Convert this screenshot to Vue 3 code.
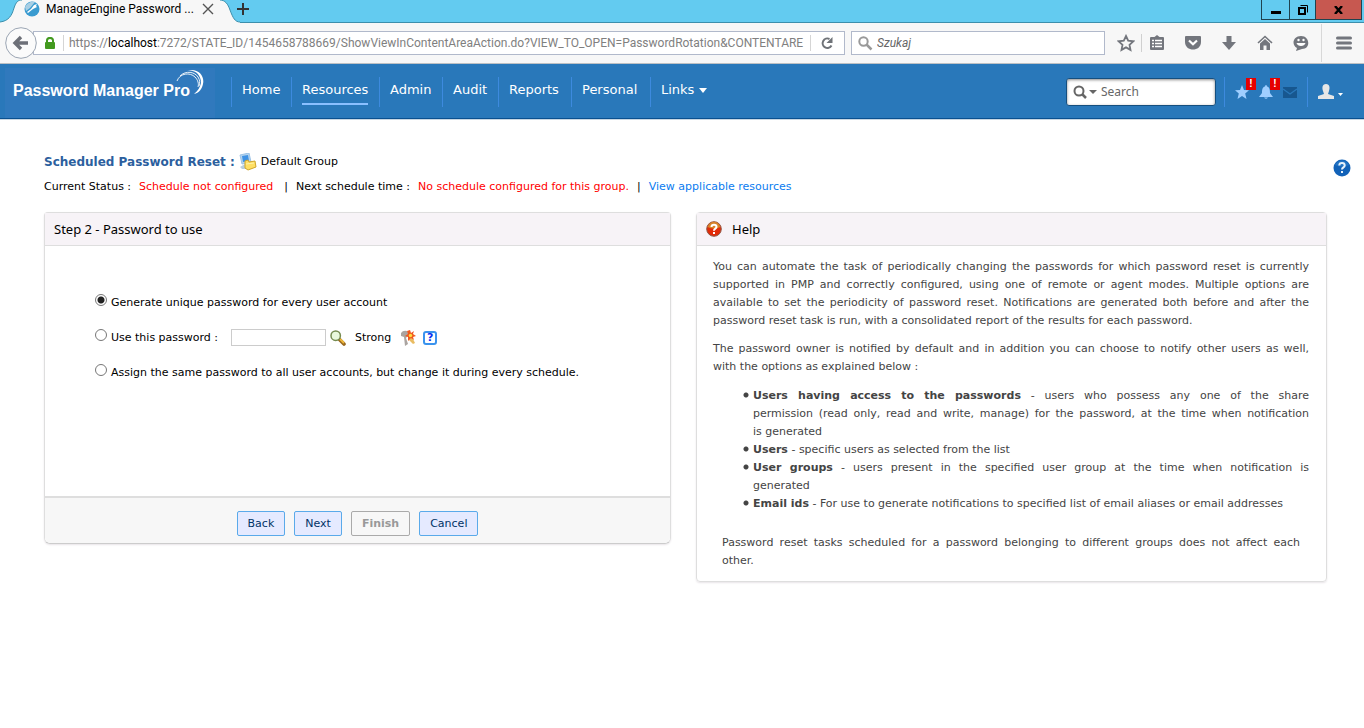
<script setup>
import { ref } from 'vue'

const nav = ['Home', 'Resources', 'Admin', 'Audit', 'Reports', 'Personal']
const mode = ref('unique')
</script>

<template>
  <div class="window">
    <div class="titlebar">
      <svg class="tab-shape" viewBox="0 0 240 23" width="240" height="23" aria-hidden="true">
        <path d="M0 23V22C9 21 12 15 14 8C16 2 18 0 22 0H220C225 0 228 4 230 10C233 18 235 22 240 22V23Z" fill="#f7f7f7" />
        <path d="M0 22C9 21 12 15 14 8C16 2 18 0 22 0M220 0C225 0 228 4 230 10C233 18 235 22 240 22" fill="none" stroke="#3c8fac" />
      </svg>
      <div class="tab">
        <svg width="16" height="16" viewBox="0 0 16 16" aria-hidden="true">
          <circle cx="8" cy="8" r="7.5" fill="#3a9bd0" />
          <path d="M1 6C3 2 7 0 11 1L6 7L2 10Z" fill="#a9cfe4" />
          <path d="M3 11L7 8L10 4L13 3L12 5L13 6L9 8L4 12Z" fill="#fff" />
        </svg>
        <span class="tab-title">ManageEngine Password ...</span>
        <button class="plain" aria-label="Close tab">
          <svg width="12" height="12" viewBox="0 0 12 12"><path d="M1 1L11 11M11 1L1 11" stroke="#555" stroke-width="1.4" /></svg>
        </button>
      </div>
      <button class="plain new-tab" aria-label="New tab">
        <svg width="12" height="12" viewBox="0 0 12 12"><path d="M6 0V12M0 6H12" stroke="#333" stroke-width="2" /></svg>
      </button>
      <div class="win-buttons">
        <button class="win min" aria-label="Minimize"><svg width="10" height="14" viewBox="0 0 10 14"><path d="M0 8H10V11H0Z" /></svg></button>
        <button class="win max" aria-label="Restore">
          <svg width="10" height="10" viewBox="0 0 10 10" fill="none" stroke="#000"><path d="M2.5 .5H9.5V7.5" /><path d="M1 3H7V9H1Z" stroke-width="2" /></svg>
        </button>
        <button class="win close" aria-label="Close"><svg width="9" height="8" viewBox="0 0 9 8"><path d="M1 0L8 8M8 0L1 8" stroke="#000" stroke-width="2.4" /></svg></button>
      </div>
    </div>

    <div class="toolbar">
      <button class="plain back" aria-label="Go back">
        <svg width="32" height="32" viewBox="0 0 32 32"><circle cx="16" cy="16" r="15.3" fill="#fbfbfb" stroke="#9ba5b3" /><path d="M16 10L10 16L16 22M10.500 16H23" fill="none" stroke="#6d7078" stroke-width="3.4" /></svg>
      </button>
      <div class="address">
        <svg class="lock" width="10" height="13" viewBox="0 0 10 13"><path d="M2 6V3.500C2 0 8 0 8 3.500V6" fill="none" stroke="#439a1f" stroke-width="2" /><rect y="5" width="10" height="7" rx="1" fill="#439a1f" /></svg>
        <span class="url">https://<b>localhost</b>:7272/STATE_ID/1454658788669/ShowViewInContentAreaAction.do?VIEW_TO_OPEN=PasswordRotation&amp;CONTENTARE</span>
        <button class="plain reload" aria-label="Reload">
          <svg width="14" height="14" viewBox="0 0 14 14"><path d="M11.500 9.500A4.700 4.700 0 1 1 9.500 3" fill="none" stroke="#6f7378" stroke-width="2" /><path d="M12.500 1V7H6.500Z" fill="#6f7378" /></svg>
        </button>
      </div>
      <label class="web-search">
        <svg width="15" height="15" viewBox="0 0 15 15"><circle cx="5.500" cy="5.500" r="4.200" fill="none" stroke="#999" stroke-width="2" /><path d="M8.500 8.500L13.500 13.500" stroke="#999" stroke-width="2.500" /></svg>
        <input type="text" placeholder="Szukaj" aria-label="Szukaj" />
      </label>
      <div class="tools">
        <button class="plain bookmark" aria-label="Bookmark"><svg width="18" height="18" viewBox="0 0 18 18"><path d="M9 2L11.200 6.700L16.300 7.300L12.500 10.800L13.500 15.900L9 13.400L4.500 15.900L5.500 10.800L1.700 7.300L6.800 6.700Z" fill="none" stroke="#73767d" stroke-width="1.800" /></svg></button>
        <button class="plain reading" aria-label="Reading list"><svg width="18" height="18" viewBox="0 0 18 18"><path d="M3 3H6.500L9 1L11.500 3H15Q16 3 16 4V15Q16 16 15 16H3Q2 16 2 15V4Q2 3 3 3Z" fill="#73767d" /><path d="M4 6.500H6M7 6.500H14M4 9.500H6M7 9.500H14M4 12.500H6M7 12.500H14" stroke="#fff" stroke-width="1.600" /></svg></button>
        <button class="plain" aria-label="Pocket"><svg width="18" height="18" viewBox="0 0 18 18"><path d="M1 3Q1 2 2 2H16Q17 2 17 3V8C17 18 1 18 1 8Z" fill="#73767d" /><path d="M5 6.500L9 10.300L13 6.500" fill="none" stroke="#fff" stroke-width="2.200" /></svg></button>
        <button class="plain" aria-label="Downloads"><svg width="18" height="18" viewBox="0 0 18 18"><path d="M6.500 2H11.500V8H16L9 16L2 8H6.500Z" fill="#73767d" /></svg></button>
        <button class="plain" aria-label="Home page"><svg width="18" height="18" viewBox="0 0 18 18"><path d="M2 9L9 2.500L16 9" fill="none" stroke="#73767d" stroke-width="1.600" /><path d="M4 9.500L9 5L14 9.500V16H10.500V11.500H7.500V16H4Z" fill="#73767d" /></svg></button>
        <button class="plain" aria-label="Hello"><svg width="18" height="18" viewBox="0 0 18 18"><path d="M9 2C18 2 19 15 10 15L4 17L5 14C-1 11 1 2 9 2Z" fill="#73767d" /><circle cx="6.500" cy="6" r="1.200" fill="#fff" /><circle cx="11.500" cy="6" r="1.200" fill="#fff" /><path d="M4.500 9H13.500C12.500 13 5.500 13 4.500 9Z" fill="#fff" /></svg></button>
      </div>
      <button class="plain menu" aria-label="Open menu"><svg width="16" height="14" viewBox="0 0 16 14"><path d="M1.500 2H14.500M1.500 7H14.500M1.500 12H14.500" stroke="#73767d" stroke-width="3" stroke-linecap="round" /></svg></button>
    </div>

    <header class="app-header">
      <div class="brand">
        <span>Password Manager Pro</span>
        <svg class="arc" width="30" height="27" viewBox="0 0 30 27" fill="none" stroke="#fff" aria-hidden="true"><path d="M10 2C21 -2 29 6 27 15C26 20 23 24 18 25C22 22 24 18 25 14C25 6 19 0 10 2Z" fill="#fff" stroke="none" /><path d="M1 12C4 4 14 3 19 8C22 11 23 15 22 18" stroke-width=".9" /><path d="M4 7C10 1 19 3 22 8C24 11 24 14 23 17" stroke-width=".9" /></svg>
      </div>
      <nav>
        <a v-for="item in nav" :key="item" href="#" :class="{ active: item === 'Resources' }"><span>{{ item }}</span></a>
        <a href="#"><span>Links</span><svg width="8" height="5" viewBox="0 0 8 5"><path d="M0 0H8L4 5Z" fill="#fff" /></svg></a>
      </nav>
      <label class="app-search">
        <svg width="26" height="14" viewBox="0 0 26 14"><circle cx="6" cy="6" r="4.500" fill="none" stroke="#666" stroke-width="2" /><path d="M9 9L13 13" stroke="#666" stroke-width="2.500" /><path d="M16 5H24L20 9Z" fill="#666" /></svg>
        <input type="text" placeholder="Search" aria-label="Search" />
      </label>
      <div class="actions">
        <button class="plain alert" aria-label="Favorites"><svg width="14" height="14" viewBox="0 0 14 14"><path d="M7 0L9 5L14 5.300L10.200 8.500L11.500 14L7 11L2.500 14L3.800 8.500L0 5.300L5 5Z" fill="#9fceff" /></svg><i>!</i></button>
        <button class="plain alert" aria-label="Notifications"><svg width="14" height="14" viewBox="0 0 14 14"><path d="M7 0Q8 0 8 1.500C11 2 11 6 11 8L14 12H0L3 8C3 6 3 2 6 1.500Q6 0 7 0ZM5 12.500H9Q7 15 5 12.500Z" fill="#9fceff" /></svg><i>!</i></button>
        <button class="plain mail" aria-label="Mail"><svg width="14" height="11" viewBox="0 0 14 11"><path d="M0 0H14V11H0Z" fill="#17578f" /><path d="M0 2L7 7L14 2" fill="none" stroke="#2978ba" stroke-width="1.400" /></svg></button>
      </div>
      <button class="plain user" aria-label="Account"><svg width="26" height="16" viewBox="0 0 26 16"><path d="M8 0C12 0 12 4 11 7L10 10L16 12V15H0V12L6 10L5 7C4 4 4 0 8 0Z" fill="#e6e6e6" /><path d="M20 9H25L22.500 12Z" fill="#fff" /></svg></button>
    </header>

    <main>
      <div class="heading">
        <h1>Scheduled Password Reset :</h1>
        <svg width="18" height="18" viewBox="0 0 18 18" aria-hidden="true"><path d="M1 2L10 0L12 9L3 11Z" fill="#b7d4ee" stroke="#9cc3e6" /><path d="M3 3L9 2L10 8L4 9Z" fill="#3f92e4" /><path d="M1 14L6 11L8 13V16H3Z" fill="#b9cfdf" /><path d="M6 8L9 7L10 9L16 8L17 14L9 17L6 15Z" fill="#ffdf63" stroke="#d0a62c" /><path d="M7 11L15 10" stroke="#fff3a8" /></svg>
        <span>Default Group</span>
        <button class="plain page-help" aria-label="Help"><svg width="18" height="18" viewBox="0 0 18 18"><circle cx="9" cy="9" r="8.500" fill="#1262b8" /><path d="M2 6C5 0 13 0 16 6Q9 9 2 6Z" fill="#2374c4" /><path d="M6.300 6.500C6.300 3.300 11.700 3.300 11.700 6.500C11.700 8.500 9 8.300 9 10.500M9 12V14" fill="none" stroke="#e8f2fb" stroke-width="2" /></svg></button>
      </div>
      <p class="status">
        <span>Current Status :</span><em>Schedule not configured</em><span class="bar">|</span><span>Next schedule time :</span><em>No schedule configured for this group.</em><span>|</span><a href="#">View applicable resources</a>
      </p>

      <div class="columns">
        <form class="panel wizard" @submit.prevent>
          <h2>Step 2 - Password to use</h2>
          <div class="options">
            <div class="row"><input id="unique" v-model="mode" type="radio" name="mode" value="unique" /><label for="unique">Generate unique password for every user account</label></div>
            <div class="row">
              <input id="fixed" v-model="mode" type="radio" name="mode" value="fixed" /><label for="fixed">Use this password :</label>
              <input class="password" type="password" aria-label="Password" />
              <button type="button" class="plain" aria-label="Show password"><svg width="16" height="16" viewBox="0 0 16 16"><path d="M9 9L14 14" stroke="#9a6a20" stroke-width="3.600" stroke-linecap="round" /><path d="M10 9L14 13" stroke="#f0b93a" stroke-width="1.800" /><circle cx="5.700" cy="5.700" r="4.700" fill="#e9f8dc" stroke="#758b50" stroke-width="1.500" /></svg></button>
              <span class="strength">Strong</span>
              <button type="button" class="plain" aria-label="Generate password"><svg width="16" height="16" viewBox="0 0 16 16"><path d="M1 3Q3 0 7 1L9 4L6 8L8 14L5 16L4 7L1 6Z" fill="#aaa4a0" /><path d="M8 8L12 7L15 13L13 14L9 10Z" fill="#e9bc62" /><path d="M10 0L11 3L14 1L13 4L16 6L13 7L14 10L11 8L8 11L8 7L5 6L8 4L7 1Z" fill="#f0581e" /><circle cx="10.500" cy="5.500" r="1.700" fill="#ffdc42" /></svg></button>
              <button type="button" class="plain policy" aria-label="Password policy">?</button>
            </div>
            <div class="row"><input id="same" v-model="mode" type="radio" name="mode" value="same" /><label for="same">Assign the same password to all user accounts, but change it during every schedule.</label></div>
          </div>
          <div class="footer">
            <button type="button">Back</button><button type="button">Next</button><button type="button" disabled>Finish</button><button type="button">Cancel</button>
          </div>
        </form>

        <section class="panel help">
          <h2><svg width="16" height="16" viewBox="0 0 16 16" aria-hidden="true"><circle cx="8" cy="8" r="7.300" fill="#e22b08" stroke="#8f5848" /><path d="M1.500 6C4 -1 12 -1 14.500 6Q8 9 1.500 6Z" fill="#d8842a" /><path d="M5.500 6C5.500 3 10.500 3 10.500 6C10.500 7.800 8 7.500 8 9.700M8 11V13" fill="none" stroke="#fff" stroke-width="2" /></svg>Help</h2>
          <div class="help-text">
            <p>You can automate the task of periodically changing the passwords for which password reset is currently supported in PMP and correctly configured, using one of remote or agent modes. Multiple options are available to set the periodicity of password reset. Notifications are generated both before and after the password reset task is run, with a consolidated report of the results for each password.</p>
            <p><span class="full">The password owner is notified by default and in addition you can choose to notify other users as well,</span> with the options as explained below :</p>
            <ul>
              <li><span class="full"><b>Users having access to the passwords</b> - users who possess any one of the share</span> <span class="full">permission (read only, read and write, manage) for the password, at the time when notification</span> is generated</li>
              <li><b>Users</b> - specific users as selected from the list</li>
              <li><span class="full"><b>User groups</b> - users present in the specified user group at the time when notification is</span> generated</li>
              <li><b>Email ids</b> - For use to generate notifications to specified list of email aliases or email addresses</li>
            </ul>
            <p class="note"><span class="full">Password reset tasks scheduled for a password belonging to different groups does not affect each</span> other.</p>
          </div>
        </section>
      </div>
    </main>
  </div>
</template>

<style>
body { background: #fff; }
</style>

<style scoped>
.window { min-height: 100vh; font: 11px/18px Verdana, "DejaVu Sans", sans-serif; color: #000; }
.window * { box-sizing: border-box; }
svg { display: block; flex: none; }
a { text-decoration: none; }
input { font: inherit; min-width: 0; }
.plain { border: 0; padding: 0; margin: 0; background: none; font: inherit; display: block; flex: none; }

.titlebar { position: relative; display: flex; height: 23px; background: #63cbf0; border-bottom: 1px solid #3c8fac; }
.tab-shape { position: absolute; left: 0; top: 0; }
.tab { position: relative; display: flex; align-items: center; width: 237px; height: 18px; padding-left: 24px; font: 12px/16px "Segoe UI", Roboto, sans-serif; }
.tab-title { width: 156px; margin-left: 6px; white-space: nowrap; }
.new-tab { height: 12px; margin-top: 3px; position: relative; }
.win-buttons { display: flex; margin-left: auto; height: 20px; padding-right: 2px; }
.win { display: flex; align-items: center; justify-content: center; padding: 0; border: 1px solid #1f4350; border-top: 0; background: none; }
.win + .win { border-left: 0; }
.min { width: 29px; }
.max { width: 26px; }
.close { width: 46px; background: #c75850; }

.toolbar { display: flex; align-items: center; height: 41px; padding: 0 12px 0 5px; background: #f7f7f7; border-bottom: 1px solid #bcc0c4; font: 12px/16px "Segoe UI", Roboto, sans-serif; }
.back { position: relative; z-index: 1; }
.address { flex: 1 1 812px; min-width: 0; display: flex; align-items: center; height: 24px; margin-left: -4px; border: 1px solid #b1b9cb; background: #fff; }
.lock { margin-left: 11px; }
.url { flex: 1; min-width: 0; height: 16px; margin-left: 8px; padding-left: 5px; border-left: 1px solid #d5d5d5; overflow: hidden; white-space: nowrap; color: #808080; }
.url b { font-weight: 400; color: #000; }
.reload { margin-left: 4px; padding: 1px 10px 1px 9px; border-left: 1px solid #d5d5d5; }
.web-search { flex: 0 1 254px; min-width: 0; display: flex; align-items: center; height: 24px; margin-left: 6px; padding-left: 6px; border: 1px solid #b1b9cb; background: #fff; }
.web-search input { flex: 1; border: 0; padding: 0; margin-left: 4px; background: none; outline: none; }
.web-search input::placeholder { color: #666; font-style: italic; }
.tools { display: flex; align-items: center; margin-left: 12px; }
.tools button + button { margin-left: 18px; }
.tools .bookmark { padding-right: 6px; border-right: 1px solid #d0d0d0; }
.tools .bookmark + .reading { margin-left: 6px; }
.menu { margin-left: 11px; padding: 12px 0 12px 14px; border-left: 1px solid #d8d8d8; }

.app-header { display: flex; align-items: center; height: 55px; padding: 2px 20px 0 5px; background: #2978ba; border-bottom: 1px solid #0a508f; box-shadow: 0 1px #c8d6e2; }
.brand { position: relative; align-self: flex-end; width: 210px; height: 50px; padding: 13px 0 0 8px; background: #3079bd; color: #fff; font: bold 16px/20px Arial, "Liberation Sans", sans-serif; white-space: nowrap; }
.arc { position: absolute; left: 171px; top: 1px; }
nav { display: grid; grid-template-columns: 60px 88px 63px 56px 73px 79px 70px; margin-left: 16px; }
nav a { display: flex; height: 30px; padding-left: 10px; border-left: 1px solid #3d8ade; color: #fff; font-size: 13px; line-height: 26px; }
nav a span { height: 28px; }
nav a svg { margin: 11px 0 0 5px; }
nav .active span { border-bottom: 2px solid #8abfff; }
.app-search { display: flex; align-items: center; width: 150px; height: 28px; margin-left: auto; padding-left: 6px; border: 1px solid #154f7f; border-radius: 3px; background: #fff; box-shadow: inset 0 1px 3px #888; }
.app-search input { flex: 1; border: 0; padding: 0; margin-left: 2px; background: none; outline: none; font-family: Tahoma, "Noto Sans", sans-serif; font-size: 12px; }
.app-search input::placeholder { color: #666; }
.actions { display: flex; align-items: center; gap: 10px; height: 30px; margin-left: 8px; padding: 0 10px; border-left: 1px solid #3d8ade; }
.alert { position: relative; }
.alert i { position: absolute; left: 11px; top: -7px; width: 10px; height: 12px; background: #e60000; color: #fff; font: bold 10px/12px Arial, "Liberation Sans", sans-serif; }
.user { padding: 7px 0 7px 10px; border-left: 1px solid #3d8ade; }

main { padding: 32px 37px 20px 44px; }
.heading { display: flex; align-items: center; height: 22px; white-space: nowrap; }
h1 { margin: 0 4px 0 0; color: #2c5f9e; font-size: 12px; line-height: 18px; }
.heading > span { margin-left: 4px; }
.page-help { margin: 12px -24px 0 auto; }
.status { display: flex; gap: 8px; margin: 5px 0 16px; white-space: nowrap; }
.status em { color: #f00; font-style: normal; }
.status .bar { margin-left: 3px; }
.status a { color: #0a7cf0; }
.columns { display: grid; grid-template-columns: 627fr 631fr; gap: 25px; align-items: start; }
.panel { border: 1px solid #dedede; border-radius: 4px; box-shadow: 0 1px 2px #e8e4e8; }
.wizard { border-radius: 4px 4px 6px 6px; border-bottom-color: #ccc; }
.panel h2 { display: flex; align-items: center; gap: 10px; height: 33px; margin: 0; padding: 0 9px; border-bottom: 1px solid #dedede; background: #f7f3f7; font: 13px/18px Tahoma, "Noto Sans", sans-serif; }
.options { display: flex; flex-direction: column; gap: 11px; height: 250px; padding: 45px 0 0 50px; }
.row { display: flex; align-items: center; height: 24px; white-space: nowrap; }
.row input[type="radio"] { width: 12px; height: 12px; margin: 0 4px 6px 0; appearance: none; border: 1px solid #777; border-radius: 50%; background: #fff; }
.row input[type="radio"]:checked { background: radial-gradient(circle, #222 0 3px, #fff 4px); }
.row .password { width: 95px; height: 17px; margin: 0 4px 2px 13px; padding: 0 2px; border: 1px solid #ccc; }
.strength { margin: 0 9px; }
.policy { width: 14px; height: 14px; margin-left: 7px; border: 2px solid #3a93ee; border-radius: 3px; color: #0a2ff0; font: bold 11px/10px "DejaVu Sans", sans-serif; }
.footer { display: flex; justify-content: center; gap: 9px; height: 47px; padding-top: 13px; border-top: 2px solid #dedede; background: #f7f7f7; border-radius: 0 0 6px 6px; }
.footer button { height: 25px; padding: 0 10px; border: 1px solid #5aaaea; border-radius: 2px; background: #e5eaff; color: #036; font: 11px/18px Verdana, "DejaVu Sans", sans-serif; }
.footer button:disabled { border-color: #aaa; background: #f7f7f7; color: #999; font-weight: 700; }
.help-text { padding: 12px 17px 11px 16px; color: #444; text-align: justify; }
.help-text p { margin: 0 0 10px; }
.help-text ul { margin: 11px 0 21px; padding-left: 30px; list-style: none; }
.help-text li { padding-left: 10px; background: radial-gradient(circle at 3px 8px, #444 2px, transparent 3px); }
.help-text .note { margin: 0 9px; }
.full { display: block; text-align-last: justify; }
</style>
